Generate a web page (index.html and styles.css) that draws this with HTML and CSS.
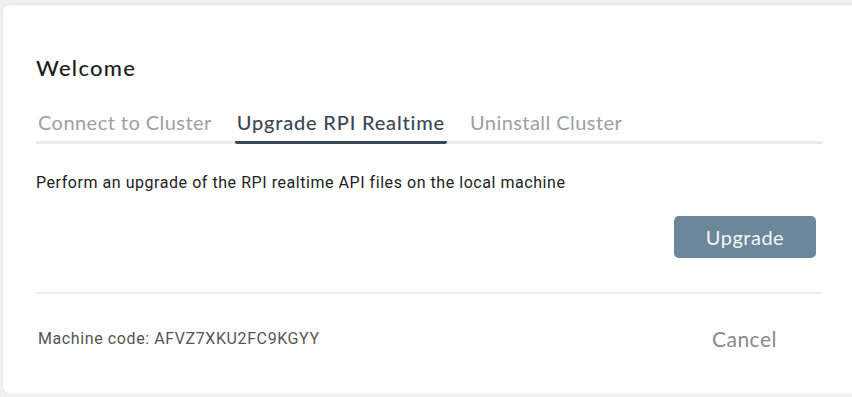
FILE: index.html
```html
<!DOCTYPE html>
<html lang="en">
<head>
    <meta charset="UTF-8">
    <meta name="viewport" content="width=device-width, initial-scale=1.0">
    <title>Welcome</title>
    <link rel="stylesheet" href="styles.css">
</head>
<body>
    <!-- Welcome dialog -->
    <div class="dialog">
        <h1 class="dialog-title">Welcome</h1>

        <div class="tabs">
            <button class="tab">Connect to Cluster</button>
            <button class="tab active">Upgrade RPI Realtime</button>
            <button class="tab">Uninstall Cluster</button>
        </div>

        <div class="tab-panel">
            <p class="description">Perform an upgrade of the RPI realtime API files on the local machine</p>
            <div class="actions">
                <button class="upgrade-button">Upgrade</button>
            </div>
        </div>

        <div class="dialog-footer">
            <span class="machine-code">Machine code: AFVZ7XKU2FC9KGYY</span>
            <button class="cancel-button">Cancel</button>
        </div>
    </div>
</body>
</html>
```

FILE: styles.css
```css
body {
    font-family: Roboto, "Liberation Sans", sans-serif;
    margin: 0;
    padding: 5px 0 0 3px;
    background-color: #f1f1f1;
    overflow: hidden;
}
.dialog {
    width: 880px;
    height: 388px;
    box-sizing: border-box;
    background: white;
    border-radius: 6px;
    box-shadow: 0 0 3px rgba(0,0,0,0.12);
    padding: 49px 0 0 33px;
}
.dialog-title {
    font-family: Lato, sans-serif;
    font-size: 22px;
    font-weight: 500;
    letter-spacing: 1.3px;
    color: #1c1c1c;
    margin: 0;
    line-height: 28px;
}
.tabs {
    display: flex;
    width: 786px;
    margin-top: 28px;
    border-bottom: 3px solid #ebebeb;
}
.tab {
    font-family: Lato, sans-serif;
    font-size: 20px;
    letter-spacing: 0.45px;
    color: #9b9fa4;
    background: none;
    border: none;
    padding: 0 2px 7px;
    margin-right: 21px;
    margin-bottom: -3px;
    border-bottom: 3px solid transparent;
    border-radius: 2px;
    cursor: pointer;
    line-height: 24px;
}
.tab.active {
    color: #3c4855;
    font-weight: 500;
    letter-spacing: 0.8px;
    border-bottom-color: #3c4855;
}
.tab-panel {
    width: 786px;
    padding-top: 30px;
}
.description {
    margin: 0;
    font-size: 16px;
    letter-spacing: 0.55px;
    color: #222;
    line-height: 18px;
}
.actions {
    display: flex;
    justify-content: flex-end;
    margin-top: 24px;
    padding-right: 6px;
}
.upgrade-button {
    width: 142px;
    height: 42px;
    background: #6b8799;
    color: #f3f6f8;
    border: none;
    border-radius: 5px;
    font-family: Lato, sans-serif;
    font-size: 20px;
    letter-spacing: 0.5px;
    cursor: pointer;
}
.dialog-footer {
    width: 786px;
    display: flex;
    justify-content: space-between;
    align-items: center;
    margin-top: 34px;
    padding-top: 32px;
    border-top: 2px solid #ececec;
}
.machine-code {
    font-size: 16px;
    letter-spacing: 0.6px;
    color: #555;
    padding-left: 2px;
}
.cancel-button {
    background: none;
    border: none;
    font-family: Lato, sans-serif;
    font-size: 21px;
    letter-spacing: 0.5px;
    color: #8a8a8a;
    margin-right: 45px;
    padding: 0;
    cursor: pointer;
}
```
